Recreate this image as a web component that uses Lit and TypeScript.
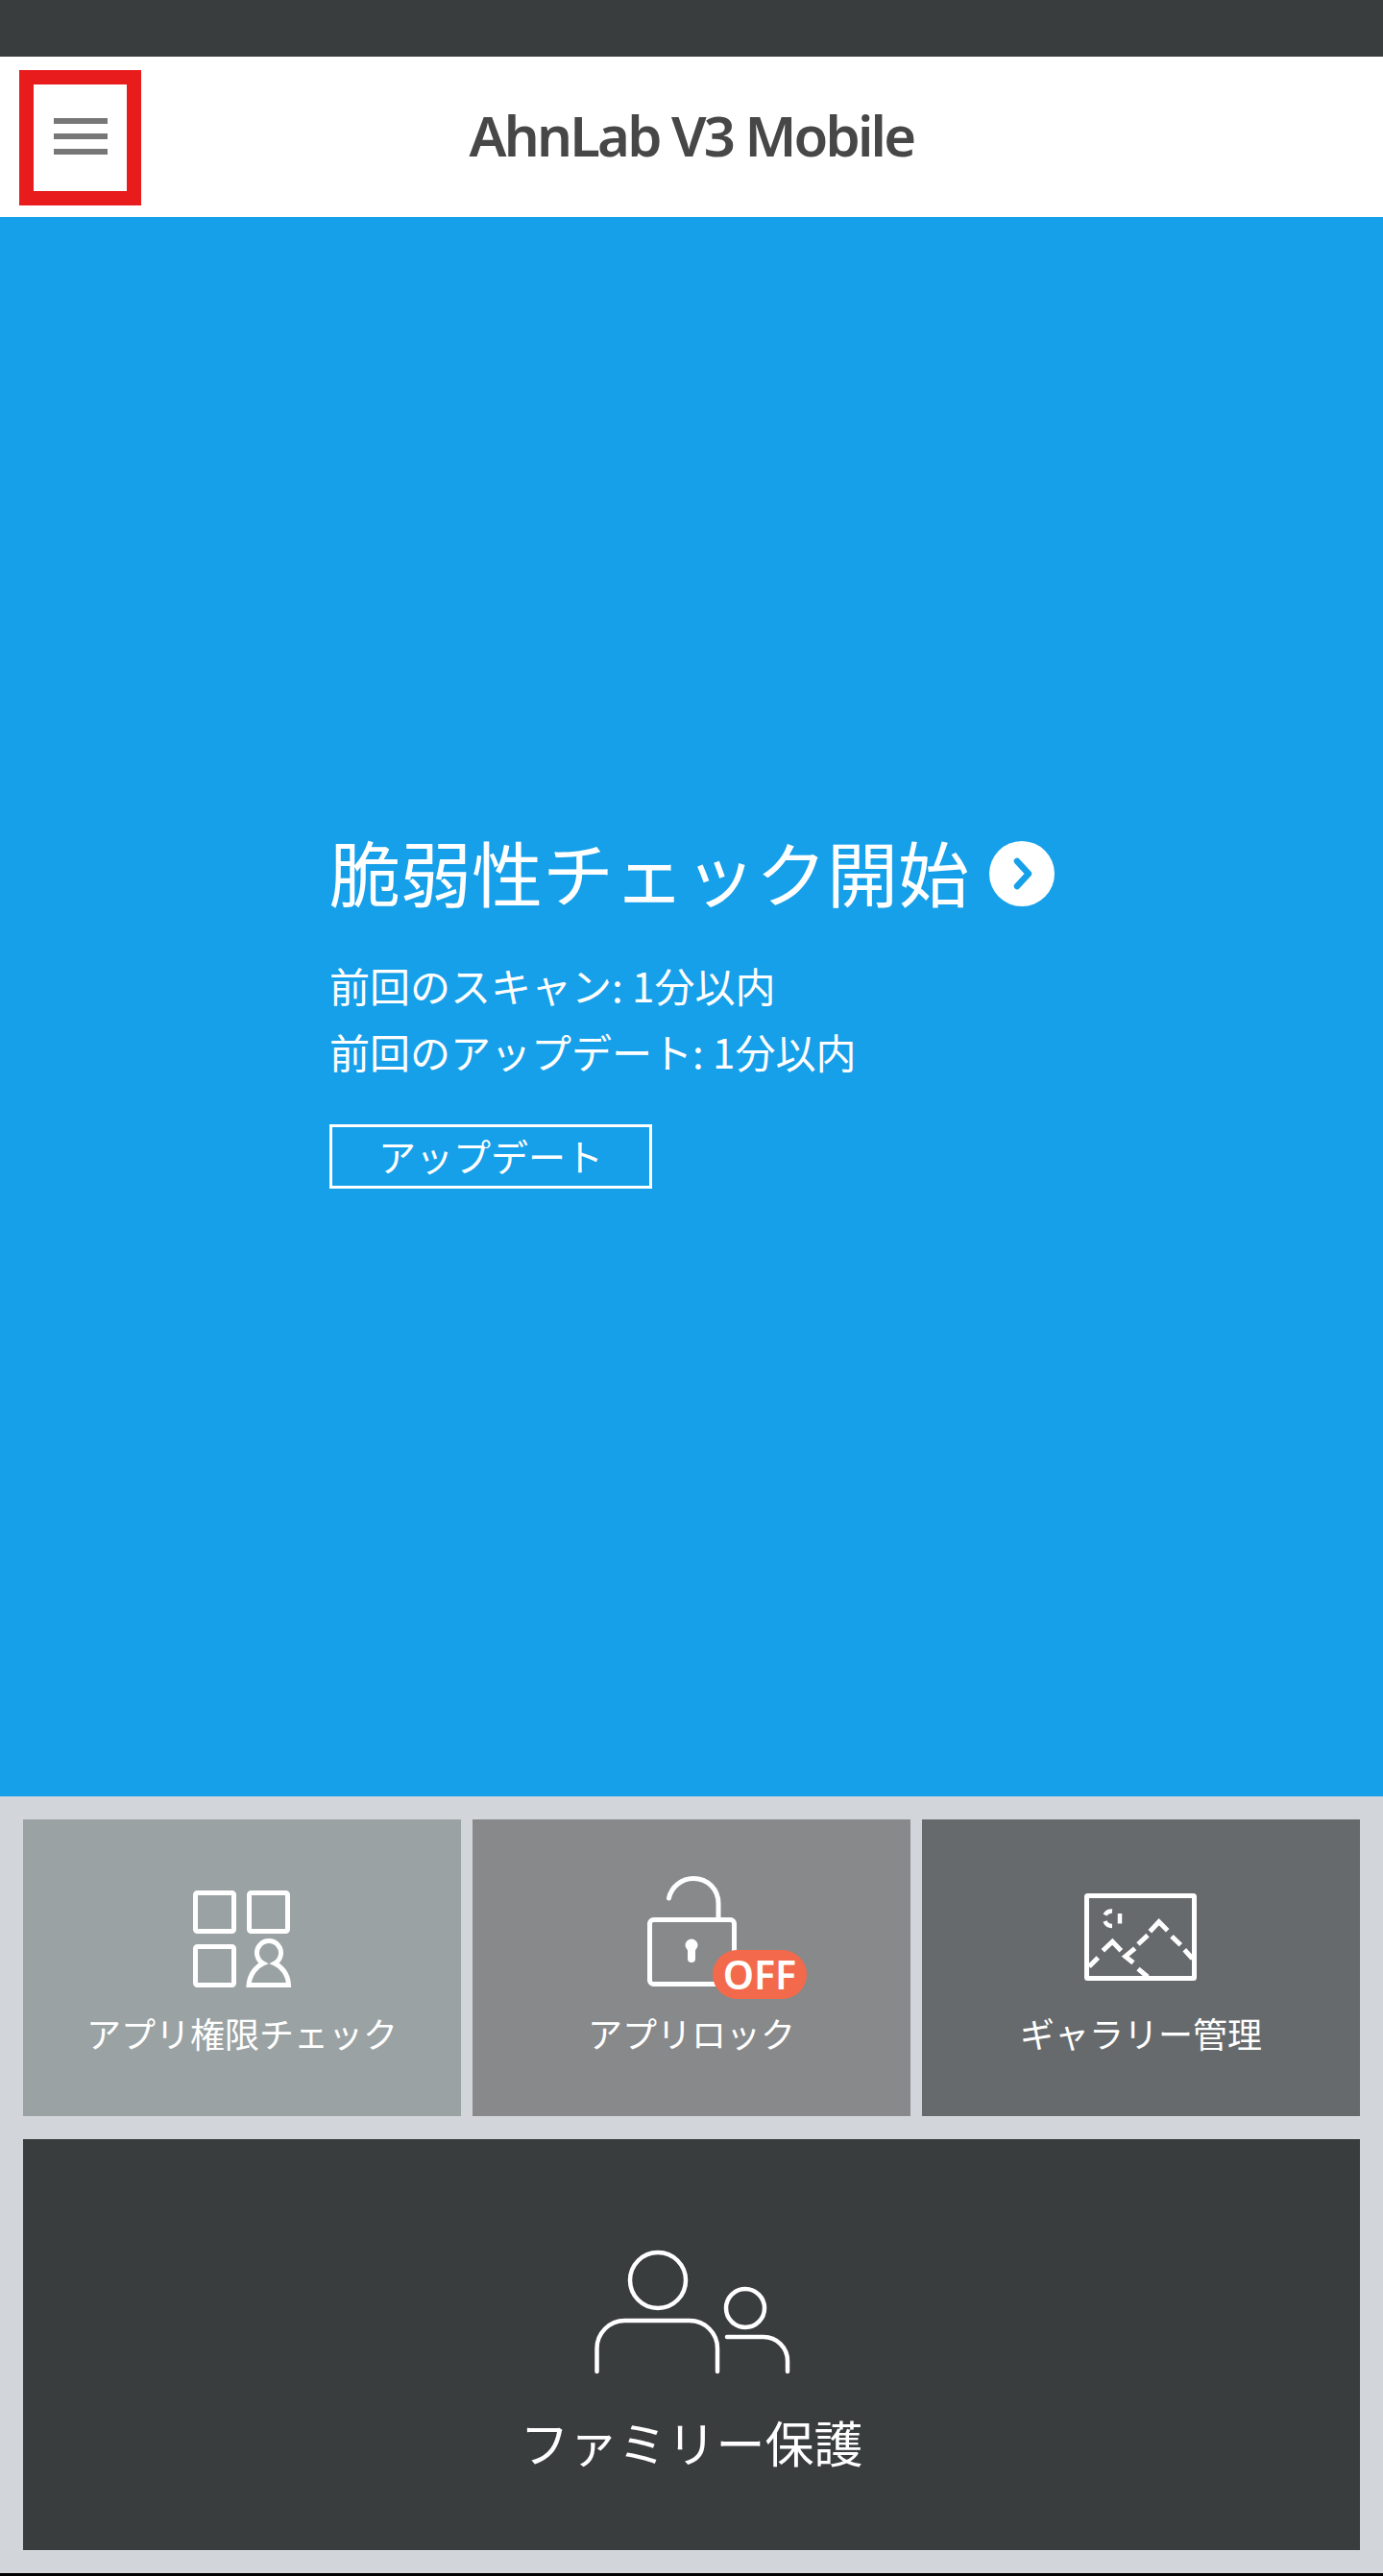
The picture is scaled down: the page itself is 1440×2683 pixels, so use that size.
import { LitElement, html, css, svg } from "lit";
import { customElement } from "lit/decorators.js";

const appsIcon = svg`
  <rect x="31.5" y="21.5" width="40" height="40" rx="2" />
  <rect x="87.5" y="21.5" width="40" height="40" rx="2" />
  <rect x="31.5" y="77.5" width="40" height="40" rx="2" />
  <path d="M87 117.5H128.5C128 106 121 98 114 95A12.5 12.5 0 1 0 102 95C95 98 88 106 87 117.5Z" />
`;

const lockIcon = svg`
  <rect x="36.5" y="49.5" width="88" height="67" rx="4" />
  <path stroke-linecap="round" d="M56.5 27C59 15 70 6.5 82 6.5C97 6.5 108 18 108 32.5V49" />
  <circle class="solid" cx="80" cy="76" r="6.5" />
  <path stroke-linecap="round" stroke-width="8" d="M80 76V90" />
`;

const galleryIcon = svg`
  <rect x="23.5" y="24.5" width="112" height="86" rx="1" />
  <g stroke-width="5">
    <path d="M89.3 61.7L98.7 51.7L107.7 60.7" />
    <path d="M77 75L87 65.7" />
    <path d="M73.7 79.3L63.7 87.7L72 94.3" />
    <path d="M77 100.7L87 109" />
    <path d="M112 66.7L121.3 75.7" />
    <path d="M125.3 80.7L133.7 90" />
    <path d="M40.3 81.7L50.3 72.3L59.3 81.7" />
    <path d="M26 98.3L35.3 89" />
  </g>
  <g stroke-width="4.5">
    <path d="M42.5 44.5A8 8 0 0 1 50 40.5" />
    <path d="M42.5 51A8 8 0 0 0 50 56" />
    <path d="M58 43V53.5" />
  </g>
`;

const familyIcon = svg`
  <circle cx="75" cy="35" r="29" />
  <path stroke-linecap="round" d="M11.5 130V106A29 29 0 0 1 40.5 77H108A29 29 0 0 1 137 106V130" />
  <circle cx="166" cy="64" r="20" />
  <path stroke-linecap="round" d="M147 94H185A25 25 0 0 1 210 119V130" />
`;

@customElement("app-root")
export class AppRoot extends LitElement {
  static styles = css`
    :host {
      display: block;
      font-family: "Noto Sans CJK JP", "Noto Sans", sans-serif;
      color: #fff;
      background: #000;
    }

    .status {
      height: 59px;
      background: #3a3d3e;
    }

    .header {
      height: 167px;
      box-sizing: border-box;
      padding: 14px 0 12px 20px;
      background: #fff;
      display: grid;
      grid-template-columns: 1fr auto 1fr;
      align-items: stretch;
    }

    .menu {
      width: 127px;
      box-sizing: border-box;
      padding-bottom: 3px;
      border: 15px solid #e81c1c;
      display: flex;
      flex-direction: column;
      align-items: center;
      justify-content: center;
      gap: 10px;
    }

    .menu span {
      width: 56px;
      height: 6px;
      background: #777;
    }

    .title {
      align-self: center;
      margin: 0 0 6px -20px;
      font-family: "Noto Sans", sans-serif;
      font-size: 58px;
      font-weight: 600;
      line-height: 70px;
      letter-spacing: -2.8px;
      color: #474747;
    }

    .hero {
      height: 1645px;
      box-sizing: border-box;
      padding: 644px 0 0 343px;
      background: #16a0e9;
    }

    .scan {
      display: flex;
      align-items: center;
      gap: 21px;
      height: 80px;
      margin: 0;
      font-size: 74px;
      font-weight: 400;
      line-height: 80px;
    }

    .scan span {
      margin-bottom: 6px;
    }

    .scan svg {
      width: 68px;
      height: 68px;
      flex: none;
    }

    .info {
      margin: 41px 0 42px;
      font-size: 42px;
      line-height: 69px;
    }

    .update {
      width: 336px;
      height: 67px;
      box-sizing: border-box;
      padding-bottom: 4px;
      border: 3px solid #fff;
      display: flex;
      align-items: center;
      justify-content: center;
      font-size: 39px;
    }

    .grid {
      padding: 24px;
      background: #d2d5da;
      display: grid;
      grid-template-columns: repeat(3, 1fr);
      gap: 24px 12px;
    }

    .tile {
      height: 309px;
      box-sizing: border-box;
      padding-top: 55px;
      display: flex;
      flex-direction: column;
      align-items: center;
    }

    .apps { background: #9aa2a3; }
    .lock { background: #88898b; }
    .gallery { background: #666a6c; }

    .icon {
      position: relative;
      width: 160px;
      height: 130px;
    }

    svg.draw {
      display: block;
      width: 100%;
      height: 100%;
      fill: none;
      stroke: #fff;
      stroke-width: 5;
    }

    .solid {
      fill: #fff;
      stroke: none;
    }

    .badge {
      position: absolute;
      left: 102px;
      top: 81px;
      width: 98px;
      height: 51px;
      border-radius: 26px;
      background: #f26a4b;
      display: flex;
      align-items: center;
      justify-content: center;
      padding-bottom: 2px;
      box-sizing: border-box;
      font-family: "Noto Sans", sans-serif;
      font-size: 41px;
      font-weight: 600;
    }

    .label {
      margin-top: 12px;
      font-size: 36px;
      line-height: 50px;
    }

    .family {
      grid-column: 1 / -1;
      height: 428px;
      box-sizing: border-box;
      padding-top: 112px;
      background: #3a3d3e;
      display: flex;
      flex-direction: column;
      align-items: center;
    }

    .family .icon {
      width: 220px;
      height: 140px;
    }

    .family svg.draw {
      stroke-width: 4.5;
    }

    .family .label {
      margin-top: 28px;
      font-size: 51px;
      line-height: 70px;
    }

    .bottom {
      height: 3px;
      background: #000;
    }
  `;

  render() {
    return html`
      <div class="status"></div>
      <header class="header">
        <div class="menu"><span></span><span></span><span></span></div>
        <h2 class="title">AhnLab V3 Mobile</h2>
      </header>
      <section class="hero">
        <h1 class="scan">
          <span>脆弱性チェック開始</span>
          <svg viewBox="0 0 68 68">
            <circle cx="34" cy="34" r="34" fill="#fff" />
            <path d="M29 21L41 34L29 47" fill="none" stroke="#16a0e9" stroke-width="6.5" stroke-linecap="round" stroke-linejoin="round" />
          </svg>
        </h1>
        <div class="info">
          <div>前回のスキャン: 1分以内</div>
          <div>前回のアップデート: 1分以内</div>
        </div>
        <div class="update">アップデート</div>
      </section>
      <section class="grid">
        <div class="tile apps">
          <div class="icon"><svg class="draw" viewBox="0 0 160 130">${appsIcon}</svg></div>
          <div class="label">アプリ権限チェック</div>
        </div>
        <div class="tile lock">
          <div class="icon">
            <svg class="draw" viewBox="0 0 160 130">${lockIcon}</svg>
            <div class="badge">OFF</div>
          </div>
          <div class="label">アプリロック</div>
        </div>
        <div class="tile gallery">
          <div class="icon"><svg class="draw" viewBox="0 0 160 130">${galleryIcon}</svg></div>
          <div class="label">ギャラリー管理</div>
        </div>
        <div class="family">
          <div class="icon"><svg class="draw" viewBox="0 0 220 140">${familyIcon}</svg></div>
          <div class="label">ファミリー保護</div>
        </div>
      </section>
      <div class="bottom"></div>
    `;
  }
}
